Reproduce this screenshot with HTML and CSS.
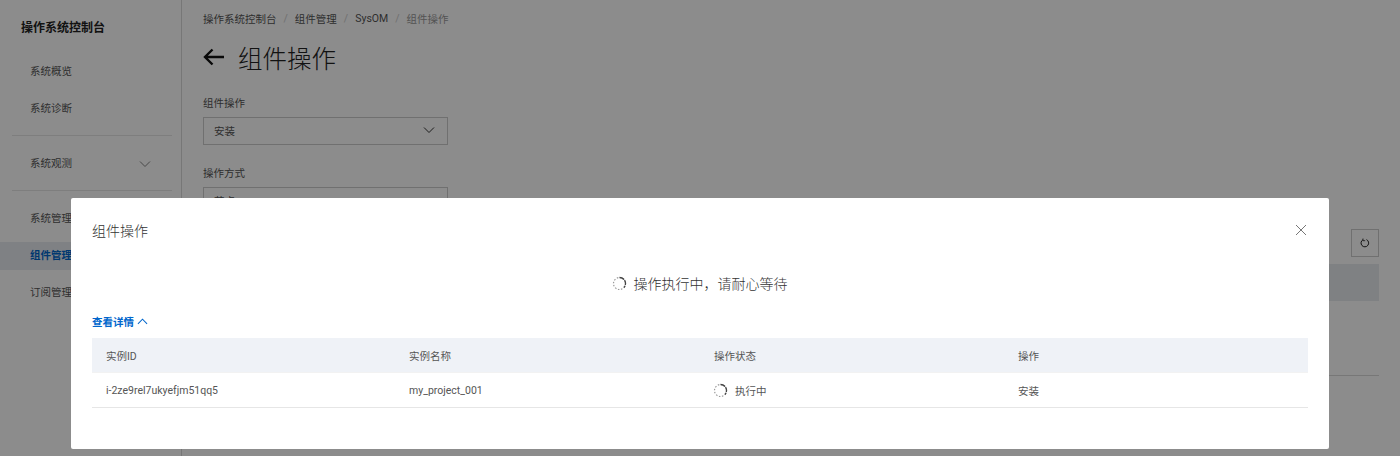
FILE: index.html
```html
<!DOCTYPE html>
<html lang="zh-CN">
<head>
  <meta charset="UTF-8">
  <meta name="viewport" content="width=device-width, initial-scale=1.0">
  <title>组件操作</title>
  <link rel="stylesheet" href="styles.css">
</head>
<body>
<div class="layout">
  <aside class="sidebar">
    <div class="brand">操作系统控制台</div>
    <div class="menu menu-first">
      <div class="menu-item">系统概览</div>
      <div class="menu-item">系统诊断</div>
    </div>
    <div class="menu">
      <div class="menu-item menu-group">系统观测
        <svg class="chevron" width="12" height="12" viewBox="0 0 12 12"><path d="M1 3.500l5 5 5-5" fill="none" stroke="#333" stroke-width="1"/></svg>
      </div>
    </div>
    <div class="menu">
      <div class="menu-item">系统管理</div>
      <div class="menu-item active">组件管理</div>
      <div class="menu-item">订阅管理</div>
    </div>
  </aside>
  <main class="content">
    <div class="crumbs">
      <span>操作系统控制台</span><i>/</i><span>组件管理</span><i>/</i><span>SysOM</span><i>/</i><span class="crumb-now">组件操作</span>
    </div>
    <div class="page-head">
      <svg width="22" height="18" viewBox="0 0 22 18"><path d="M21 9H2M9.500 1.500L2 9l7.500 7.500" fill="none" stroke="#111" stroke-width="2.400"/></svg>
      <h1>组件操作</h1>
    </div>
    <label class="field-label">组件操作</label>
    <div class="select">安装
      <svg width="12" height="12" viewBox="0 0 12 12"><path d="M1 3.500l5 5 5-5" fill="none" stroke="#333" stroke-width="1"/></svg>
    </div>
    <label class="field-label">操作方式</label>
    <div class="select">节点</div>
    <div class="toolbar">
      <button class="refresh">
        <svg width="10" height="10" viewBox="0 0 10 10"><path d="M6.500 1.600A3.800 3.800 0 1 1 3 1.700" fill="none" stroke="#222" stroke-width="1"/><path d="M3 0.500v2.200h2.200" fill="none" stroke="#222" stroke-width="0.800"/></svg>
      </button>
    </div>
    <div class="bg-thead"></div>
    <div class="bg-row"></div>
  </main>
</div>

<div class="mask">
  <div class="modal">
    <div class="modal-head">
      <span>组件操作</span>
      <svg width="12" height="12" viewBox="0 0 12 12"><path d="M1 1l10 10M11 1L1 11" fill="none" stroke="#777" stroke-width="1"/></svg>
    </div>
    <div class="status">
      <svg class="spin" width="15" height="15" viewBox="0 0 15 15"><circle cx="7.500" cy="7.500" r="6" fill="none" stroke="#999" stroke-width="1.200" stroke-dasharray="1.500 1.600"/><path d="M7.500 1.500A6 6 0 0 1 12 11.500" fill="none" stroke="#444" stroke-width="1.300" stroke-dasharray="5 0.800"/></svg>
      <span>操作执行中，请耐心等待</span>
    </div>
    <div class="details">查看详情
      <svg width="11" height="11" viewBox="0 0 12 12"><path d="M1 8.500l5-5 5 5" fill="none" stroke="#06c" stroke-width="1.100"/></svg>
    </div>
    <div class="table">
      <div class="row thead">
        <div>实例ID</div><div>实例名称</div><div>操作状态</div><div>操作</div>
      </div>
      <div class="row">
        <div>i-2ze9rel7ukyefjm51qq5</div>
        <div>my_project_001</div>
        <div class="cell-status">
          <svg class="spin" width="15" height="15" viewBox="0 0 15 15"><circle cx="7.500" cy="7.500" r="6" fill="none" stroke="#999" stroke-width="1.200" stroke-dasharray="1.500 1.600"/><path d="M7.500 1.500A6 6 0 0 1 12 11.500" fill="none" stroke="#444" stroke-width="1.300" stroke-dasharray="5 0.800"/></svg>
          执行中
        </div>
        <div>安装</div>
      </div>
    </div>
  </div>
</div>
</body>
</html>
```

FILE: styles.css
```css
* {
  box-sizing: border-box;
}
html, body {
  margin: 0;
  height: 456px;
  overflow: hidden;
}
body {
  font-family: Roboto, "Noto Sans CJK SC", sans-serif;
  font-size: 10.5px;
  color: #444;
  background: #fff;
}
.layout {
  display: flex;
  height: 456px;
}

/* sidebar */
.sidebar {
  width: 182px;
  flex: none;
  border-right: 1px solid #d9d9d9;
  padding-top: 19px;
}
.brand {
  padding-left: 21px;
  font-size: 12px;
  font-weight: 700;
  line-height: 18px;
  color: #222;
}
.menu {
  margin: 0 9px 0 12px;
  padding: 14px 0 12px;
  border-bottom: 1px solid #e6e6e6;
}
.menu-first {
  padding-top: 21px;
}
.menu:last-child {
  border-bottom: 0;
}
.menu-item {
  height: 28px;
  margin: 0 -9px 9px -12px;
  padding-left: 30px;
  line-height: 28px;
  color: #555;
}
.menu-item:last-child {
  margin-bottom: 0;
}
.menu-group {
  display: flex;
  align-items: center;
  justify-content: space-between;
  padding-right: 30px;
}
.chevron {
  opacity: 0.6;
}
.active {
  background: #e8ecf1;
  color: #06c;
  font-weight: 700;
}

/* page behind the dialog */
.content {
  flex: 1;
  padding: 11px 21px 0 21px;
}
.crumbs {
  display: flex;
  align-items: center;
  height: 14px;
  color: #555;
}
.crumbs i {
  font-style: normal;
  margin: 0 7px;
  color: #ccc;
}
.crumb-now {
  color: #999;
}
.page-head {
  display: flex;
  align-items: center;
  gap: 13px;
  margin-top: 15px;
  height: 34px;
}
.page-head h1 {
  margin: 0;
  font-size: 24.500px;
  font-weight: 300;
  color: #222;
}
.field-label {
  display: block;
  margin-top: 23px;
  line-height: 14px;
  color: #555;
}
.select {
  display: flex;
  align-items: center;
  justify-content: space-between;
  width: 245px;
  height: 28px;
  margin-top: 6px;
  padding: 0 12px 2px 10px;
  border: 1px solid #ccc;
  color: #555;
}
.select + .field-label {
  margin-top: 22px;
}
.toolbar {
  display: flex;
  justify-content: flex-end;
  margin-top: 14px;
}
.refresh {
  display: flex;
  align-items: center;
  justify-content: center;
  width: 28px;
  height: 28px;
  padding: 0;
  background: #fff;
  border: 1px solid #ccc;
}
.bg-thead {
  height: 37px;
  margin-top: 7px;
  background: #e8ecef;
}
.bg-row {
  height: 75px;
  border-bottom: 1px solid #d9d9d9;
}

/* dialog */
.mask {
  position: fixed;
  inset: 0;
  padding: 198px 71px 0 71px;
  background: rgba(0, 0, 0, 0.45);
}
.modal {
  height: 251px;
  padding: 0 21px;
  background: #fff;
  border-radius: 2px;
}
.modal-head {
  display: flex;
  align-items: center;
  justify-content: space-between;
  height: 64px;
  font-size: 14px;
  font-weight: 300;
  color: #333;
  padding-right: 1px;
}
.status {
  display: flex;
  align-items: center;
  justify-content: center;
  gap: 6px;
  height: 40px;
  margin-top: 1px;
  font-size: 14px;
  font-weight: 300;
  color: #333;
}
.spin {
  margin: 0 1px 0 -1px;
}
.details {
  display: flex;
  align-items: center;
  gap: 3px;
  height: 14px;
  margin-top: 11px;
  font-weight: 700;
  color: #06c;
}
.table {
  margin-top: 10px;
}
.row {
  display: grid;
  grid-template-columns: 303px 305px 304px 1fr;
  align-items: center;
  height: 35px;
  padding-left: 14px;
  border-bottom: 1px solid #e6e6e6;
  color: #555;
}
.thead {
  background: #eff2f7;
  border-bottom: 1px solid #f2f2f2;
}
.cell-status {
  display: flex;
  align-items: center;
  gap: 6px;
}
```
